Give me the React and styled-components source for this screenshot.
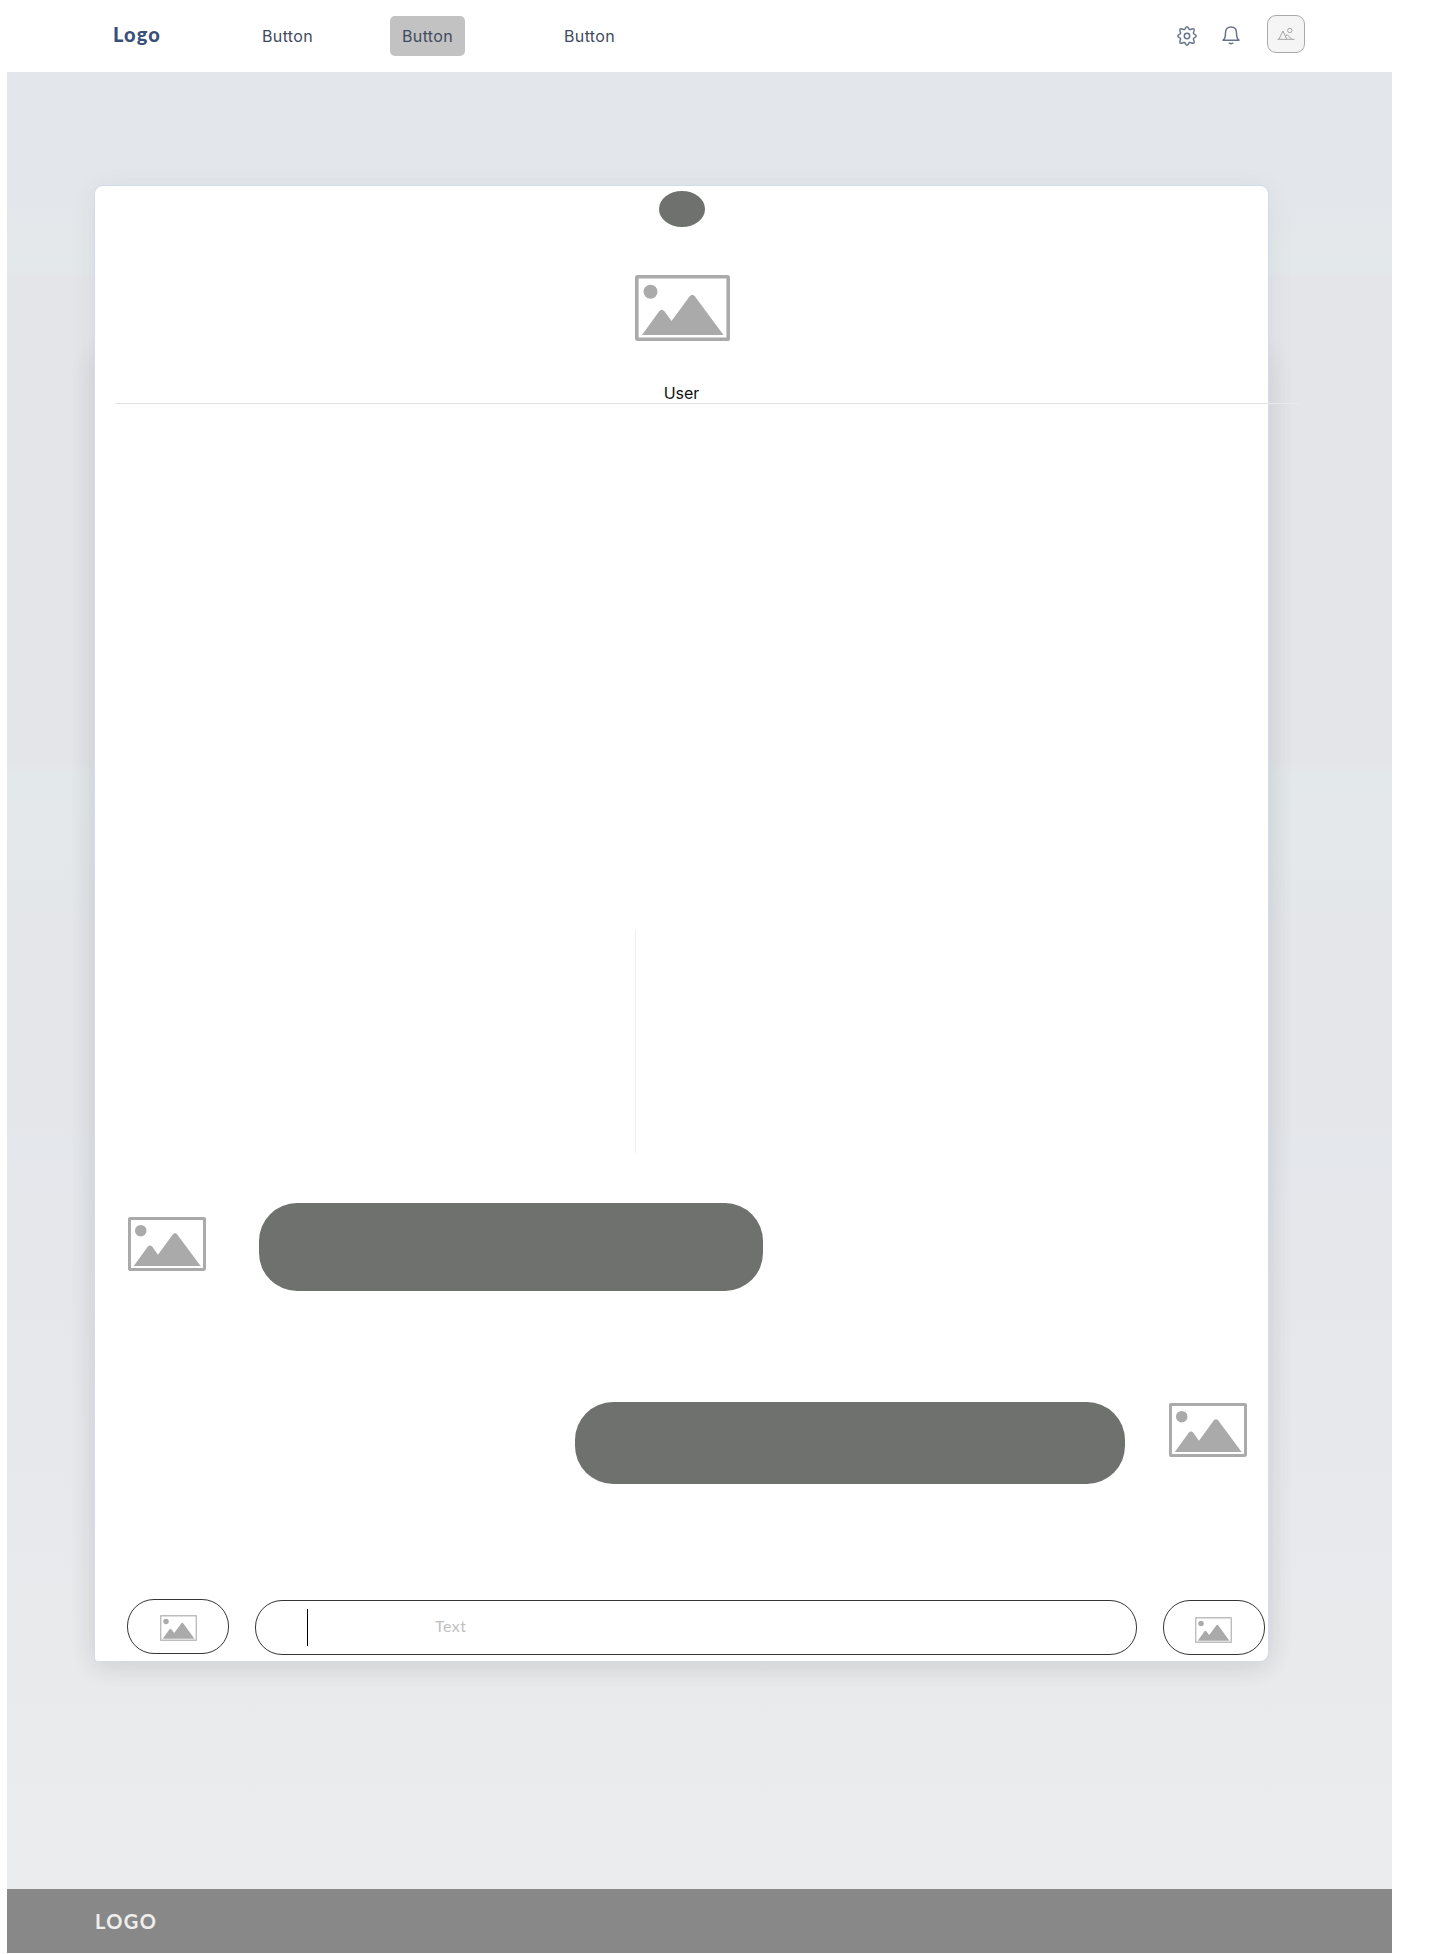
import React from "react";
import styled, { createGlobalStyle } from "styled-components";

const GlobalStyle = createGlobalStyle`
  * { box-sizing: border-box; }
  body { margin: 0; background: #fff; font-family: Inter, "Liberation Sans", sans-serif; }
`;

const Page = styled.div`
  width: 1440px;
  height: 1954px;
  padding-left: 7px;
  overflow: hidden;
`;

const Header = styled.header`
  display: flex;
  justify-content: space-between;
  height: 72px;
  width: 1385px;
  padding: 0 87px 0 106px;
`;

const Side = styled.div`
  display: flex;
  align-items: flex-start;
`;

const Brand = styled.div`
  width: 137px;
  padding-top: 20px;
  font: 900 20px/28px Lato, sans-serif;
  letter-spacing: 1.1px;
  color: #3a5078;
`;

const Nav = styled.nav`
  display: flex;
  padding-top: 16px;
`;

const NavButton = styled.button`
  width: 75px;
  height: 40px;
  margin-right: ${(p) => p.$after || "0"};
  padding: 1px 0 0;
  border: 0;
  border-radius: 5px;
  background: ${(p) => (p.$active ? "#c2c2c2" : "transparent")};
  color: #3f4a60;
  font: 400 16px/39px Inter, sans-serif;
  letter-spacing: 0.35px;
`;

const IconSlot = styled.div`
  display: flex;
  margin: ${(p) => p.$margin};
`;

const Avatar = styled.div`
  display: grid;
  place-items: center;
  width: 38px;
  height: 38px;
  margin-top: 15px;
  border: 1px solid #aaa;
  border-radius: 9px;
  background: #f5f5f5;
`;

const Main = styled.main`
  isolation: isolate;
  width: 1385px;
  height: 1817px;
  padding: 114px 0 0 88px;
  background: linear-gradient(#e3e6eb 0, #e3e7eb 125px, #e3e8ea 198px, #e4e5e9 206px,
    #e4e5e9 690px, #e3e8ea 700px, #e3e7ea 835px, #e5e6ea 850px, #e5e6ea 1058px,
    #e4e7eb 1068px, #e6e7eb 1190px, #e8e9ec 1440px, #ebeced 1817px);
`;

const Card = styled.section`
  position: relative;
  display: flex;
  flex-direction: column;
  width: 1173px;
  height: 1475px;
  border-radius: 8px 8px 8px 3px;
  background: #fff;
  box-shadow: -1px 0 #d0dcea, 1px 0 #d0dcea, 0 -1px #d0dcea,
    0 4px 28px rgba(50, 60, 65, 0.07);

  &::before {
    content: "";
    position: absolute;
    z-index: -1;
    inset: 165px 0 0;
    border-radius: 8px;
    box-shadow: 0 4px 28px rgba(50, 60, 65, 0.11);
  }
`;

const Profile = styled.div`
  display: flex;
  flex-direction: column;
  align-items: center;
  height: 217px;
  padding-top: 5px;
`;

const Dot = styled.div`
  flex: none;
  width: 46px;
  height: 36px;
  border-radius: 50%;
  background: #6f716e;
`;

const UserName = styled.div`
  margin-top: 41px;
  font-size: 16px;
  line-height: 22px;
  color: #111;
`;

const Rule = styled.hr`
  flex: none;
  width: 1185px;
  height: 1px;
  margin: 0 0 0 20px;
  border: 0;
  background: linear-gradient(90deg, #e2e2e2 1153px, #e9e9eb 1153px);
`;

const Thread = styled.div`
  height: 613px;
  padding: 526px 0 0 540px;
`;

const Thin = styled.div`
  width: 1px;
  height: 223px;
  background: #f0f0f0;
`;

const Messages = styled.div`
  flex: 1;
  padding-top: 186px;
`;

const Message = styled.div`
  display: flex;
  align-items: flex-start;
  justify-content: ${(p) => (p.$own ? "flex-end" : "flex-start")};
  height: ${(p) => (p.$own ? "197px" : "199px")};
  padding: ${(p) => (p.$own ? "0 21px 0 0" : "0 0 0 33px")};
  gap: ${(p) => (p.$own ? "44px" : "53px")};
`;

const Bubble = styled.div`
  width: ${(p) => p.$width}px;
  height: ${(p) => p.$height}px;
  border-radius: 38px;
  background: #6f716e;
`;

const Composer = styled.div`
  display: flex;
  align-items: flex-start;
  height: 63px;
  padding-left: 32px;
  gap: 26px;
`;

const Pill = styled.div`
  display: flex;
  align-items: flex-start;
  width: ${(p) => p.$width}px;
  height: 55px;
  margin-top: ${(p) => p.$top || 0}px;
  padding: ${(p) => p.$pad};
  border: 1px solid #353535;
  border-radius: 27px;
`;

const Caret = styled.span`
  width: 1px;
  height: 37px;
  background: #000;
`;

const Placeholder = styled.span`
  margin: 7px 0 0 127px;
  font: 400 16px/20px Lato, sans-serif;
  letter-spacing: 0.5px;
  color: #bfbfbf;
`;

const PictureSvg = styled.svg`
  display: block;
  flex: none;
  margin: ${(p) => p.$top || 0}px 0 0 ${(p) => p.$left || 0}px;
`;

const Footer = styled.footer`
  width: 1385px;
  height: 64px;
  padding: 18px 0 0 88px;
  background: #888;
  color: #efefef;
  font: 700 20px/28px Lato, sans-serif;
  letter-spacing: 1.4px;
`;

function Picture({ width, height, top, left, stroke = "#aaa" }) {
  return (
    <PictureSvg $top={top} $left={left} width={width} height={height} viewBox="0 0 95 66" preserveAspectRatio="none">
      <rect x="1.8" y="1.8" width="91.4" height="62.4" rx="0.8" fill="none" stroke={stroke} strokeWidth="3.6" />
      <circle cx="15.5" cy="16.7" r="7" fill="#aaa" />
      <path d="M7 60 24 36.5q2.8-3.6 5.6 0L36.500 46 54.500 21.500q2.700-3.500 5.500 0L88.500 60z" fill="#aaa" />
    </PictureSvg>
  );
}

function GearIcon() {
  return (
    <svg width="20" height="20" viewBox="0 0 20 20" fill="none" stroke="#66738d" strokeWidth="1.5" strokeLinejoin="round">
      <path d="M8.400 2.400Q10-.8 11.600 2.400C11.900 3.500 12.900 3.900 13.900 3.300 17.200 2.200 17.800 2.800 16.700 6.100 16.100 7.100 16.500 8.100 17.600 8.400Q20.800 10 17.600 11.600C16.500 11.900 16.100 12.900 16.700 13.900 17.800 17.200 17.200 17.800 13.900 16.700 12.900 16.100 11.900 16.500 11.600 17.600Q10 20.800 8.400 17.600C8.100 16.500 7.100 16.100 6.100 16.700 2.800 17.800 2.200 17.200 3.300 13.900 3.900 12.900 3.500 11.900 2.400 11.600Q-.8 10 2.400 8.400C3.500 8.100 3.900 7.100 3.300 6.100 2.200 2.800 2.800 2.200 6.100 3.300 7.100 3.900 8.100 3.500 8.400 2.400Z" />
      <circle cx="10" cy="10" r="2.700" />
    </svg>
  );
}

function BellIcon() {
  return (
    <svg width="18" height="19" viewBox="0 0 18 19" fill="none" stroke="#66738d" strokeWidth="1.500" strokeLinecap="round" strokeLinejoin="round">
      <path d="M1 14.200c1.900-1.200 2.500-2.300 2.500-7.200C3.500 3.200 5.500 1 9 1s5.500 2.200 5.500 6c0 4.900.6 6 2.500 7.200z" />
      <path d="M7.300 17.200q1.700 1.300 3.400 0" />
    </svg>
  );
}

function LandscapeIcon() {
  return (
    <svg width="18" height="14" viewBox="0 0 18 14" fill="none" stroke="#a3a3a3">
      <path d="M.5 12.300h17M2 12 6 4l3.700 8M8 9.500l2.300-1.700 4.200 4.200" />
      <circle cx="12.800" cy="3.500" r="2.200" />
    </svg>
  );
}

export default function App() {
  return (
    <>
      <GlobalStyle />
      <Page>
        <Header>
          <Side>
            <Brand>Logo</Brand>
            <Nav>
              <NavButton $after="65px">Button</NavButton>
              <NavButton $active $after="87px">Button</NavButton>
              <NavButton>Button</NavButton>
            </Nav>
          </Side>
          <Side>
            <IconSlot $margin="26px 25px 0 0"><GearIcon /></IconSlot>
            <IconSlot $margin="26px 27px 0 0"><BellIcon /></IconSlot>
            <Avatar><LandscapeIcon /></Avatar>
          </Side>
        </Header>
        <Main>
          <Card>
            <Profile>
              <Dot />
              <Picture width={95} height={66} top={48} left={2} />
              <UserName>User</UserName>
            </Profile>
            <Rule />
            <Thread><Thin /></Thread>
            <Messages>
              <Message>
                <Picture width={78} height={54} top={14} />
                <Bubble $width={504} $height={88} />
              </Message>
              <Message $own>
                <Bubble $width={550} $height={82} />
                <Picture width={78} height={54} top={1} />
              </Message>
            </Messages>
            <Composer>
              <Pill $width={102} $pad="15px 0 0 32px">
                <Picture width={37} height={26} stroke="#bdbdbd" />
              </Pill>
              <Pill $width={882} $top={1} $pad="8px 0 0 51px">
                <Caret />
                <Placeholder>Text</Placeholder>
              </Pill>
              <Pill $width={102} $top={1} $pad="16px 0 0 31px">
                <Picture width={37} height={26} stroke="#bdbdbd" />
              </Pill>
            </Composer>
          </Card>
        </Main>
        <Footer>LOGO</Footer>
      </Page>
    </>
  );
}
